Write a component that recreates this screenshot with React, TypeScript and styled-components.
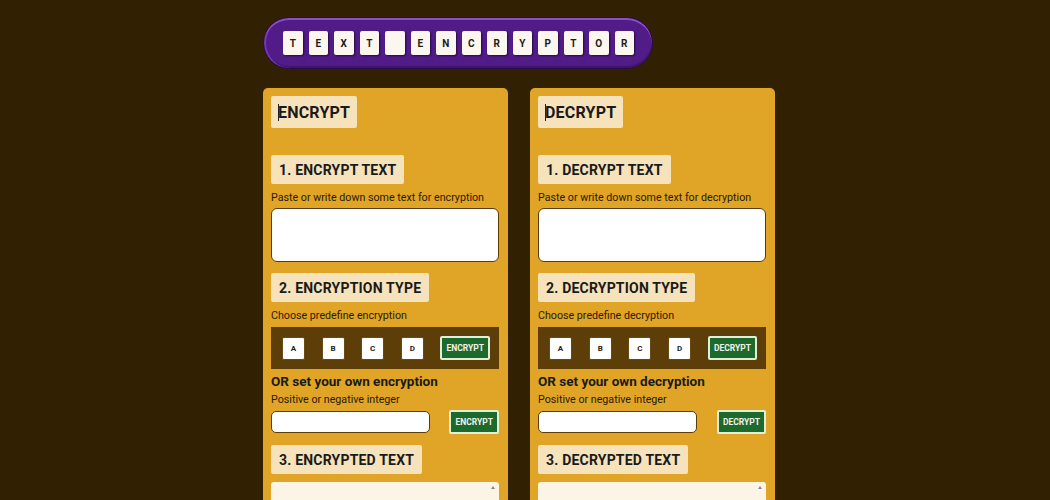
import styled, { createGlobalStyle } from 'styled-components';

const GlobalStyle = createGlobalStyle`
  body {
    margin: 0;
    background: #312102;
    font-family: Roboto, "Liberation Sans", sans-serif;
    overflow: hidden;
  }
`;

const TITLE = 'TEXT ENCRYPTOR'.split('');
const PRESETS = ['A', 'B', 'C', 'D'];

type PanelProps = {
  title: string;
  verb: string;
  noun: string;
  past: string;
};

function Panel({ title, verb, noun, past }: PanelProps) {
  return (
    <Card>
      <MainHeading>
        <Caret />
        {title}
      </MainHeading>

      <SectionHeading $top={27}>1. {title} TEXT</SectionHeading>
      <Label>Paste or write down some text for {noun}</Label>
      <TextBox />

      <SectionHeading $top={11}>2. {title}ION TYPE</SectionHeading>
      <Label>Choose predefine {noun}</Label>
      <PresetBar>
        {PRESETS.map((p) => (
          <PresetButton key={p}>{p}</PresetButton>
        ))}
        <GreenButton>{verb}</GreenButton>
      </PresetBar>

      <OwnTitle>OR set your own {noun}</OwnTitle>
      <Label $top={4}>Positive or negative integer</Label>
      <InputRow>
        <NumberInput />
        <GreenButton>{verb}</GreenButton>
      </InputRow>

      <SectionHeading $top={11}>3. {past} TEXT</SectionHeading>
      <ResultBox>
        <ScrollArrow />
      </ResultBox>
    </Card>
  );
}

export default function App() {
  return (
    <>
      <GlobalStyle />
      <Page>
        <TitleBar>
          {TITLE.map((c, i) => (
            <Tile key={i}>{c === ' ' ? '' : c}</Tile>
          ))}
        </TitleBar>
        <Columns>
          <Panel title="ENCRYPT" verb="ENCRYPT" noun="encryption" past="ENCRYPTED" />
          <Panel title="DECRYPT" verb="DECRYPT" noun="decryption" past="DECRYPTED" />
        </Columns>
      </Page>
    </>
  );
}

const Page = styled.div`
  width: 512px;
  margin-left: 263px;
  padding-top: 17px;
`;

const TitleBar = styled.div`
  box-sizing: border-box;
  width: 390px;
  height: 52px;
  border-radius: 26px;
  background: #511c88;
  border: 1px solid #2a0d48;
  box-shadow: inset 0 2px 0 #8a50c8, inset 2px 0 0 #7438b0, inset 0 -2px 0 #3f1470;
  display: flex;
  align-items: center;
  gap: 6px;
  padding-left: 19px;
`;

const Tile = styled.div`
  width: 19.5px;
  height: 24px;
  background: #fbf7ef;
  border-radius: 2px;
  box-shadow: 1px 1px 2px rgba(20, 0, 40, 0.7);
  display: flex;
  align-items: center;
  justify-content: center;
  font-size: 10px;
  font-weight: 700;
  color: #1b1b1b;
`;

const Columns = styled.div`
  display: flex;
  gap: 22px;
  margin-top: 19px;
`;

const Card = styled.div`
  box-sizing: border-box;
  width: 245px;
  min-height: 480px;
  background: #e0a426;
  border-radius: 5px;
  padding: 8px;
  display: flex;
  flex-direction: column;
  align-items: flex-start;

  & > * {
    flex-shrink: 0;
  }
`;

const MainHeading = styled.div`
  position: relative;
  height: 32px;
  padding: 0 7px;
  background: #f6e2bb;
  border-radius: 2px;
  display: flex;
  align-items: center;
  font-size: 16px;
  font-weight: 700;
  color: #1a1a1a;
  letter-spacing: 0.2px;
`;

const Caret = styled.span`
  position: absolute;
  left: 7px;
  top: 8px;
  width: 1px;
  height: 17px;
  background: #222;
`;

const SectionHeading = styled.div<{ $top: number }>`
  margin-top: ${({ $top }) => $top}px;
  height: 29px;
  padding: 0 8px;
  background: #f6e2bb;
  border-radius: 2px;
  display: flex;
  align-items: center;
  font-size: 14px;
  font-weight: 700;
  letter-spacing: 0.2px;
  color: #1a1a1a;
`;

const Label = styled.div<{ $top?: number }>`
  margin-top: ${({ $top = 7 }) => $top}px;
  font-size: 10.7px;
  line-height: 14px;
  color: #2a1a00;
`;

const TextBox = styled.div`
  box-sizing: border-box;
  margin-top: 3px;
  width: 228px;
  height: 54px;
  background: #fff;
  border: 1px solid #5b3c06;
  border-radius: 6px;
`;

const PresetBar = styled.div`
  box-sizing: border-box;
  margin-top: 4px;
  width: 228px;
  height: 42px;
  background: #5d3e08;
  display: flex;
  align-items: center;
  justify-content: space-between;
  padding: 0 9px 0 11px;
`;

const PresetButton = styled.div`
  box-sizing: border-box;
  width: 23px;
  height: 23px;
  background: #fff;
  border: 1px solid #6a4a10;
  border-radius: 2px;
  display: flex;
  align-items: center;
  justify-content: center;
  font-size: 8px;
  font-weight: 700;
  color: #222;
`;

const GreenButton = styled.div`
  box-sizing: border-box;
  height: 24px;
  padding: 0 4px;
  min-width: 48px;
  background: #1d6a2c;
  border: 2px solid #dff0d8;
  border-radius: 2px;
  display: flex;
  align-items: center;
  justify-content: center;
  font-size: 8.5px;
  font-weight: 700;
  color: #f2f2e8;
`;

const OwnTitle = styled.div`
  margin-top: 4px;
  font-size: 13.5px;
  font-weight: 700;
  line-height: 16px;
  color: #1a1a1a;
`;

const InputRow = styled.div`
  margin-top: 3px;
  width: 228px;
  display: flex;
  align-items: center;
  justify-content: space-between;
`;

const NumberInput = styled.div`
  box-sizing: border-box;
  width: 159px;
  height: 22px;
  background: #fff;
  border: 1px solid #5b3c06;
  border-radius: 5px;
`;

const ResultBox = styled.div`
  position: relative;
  box-sizing: border-box;
  margin-top: 8px;
  width: 228px;
  height: 60px;
  background: #fcf4e4;
  border-radius: 3px;
`;

const ScrollArrow = styled.span`
  position: absolute;
  right: 4px;
  top: 4px;
  width: 0;
  height: 0;
  border-left: 2px solid transparent;
  border-right: 2px solid transparent;
  border-bottom: 3px solid #888;
`;
